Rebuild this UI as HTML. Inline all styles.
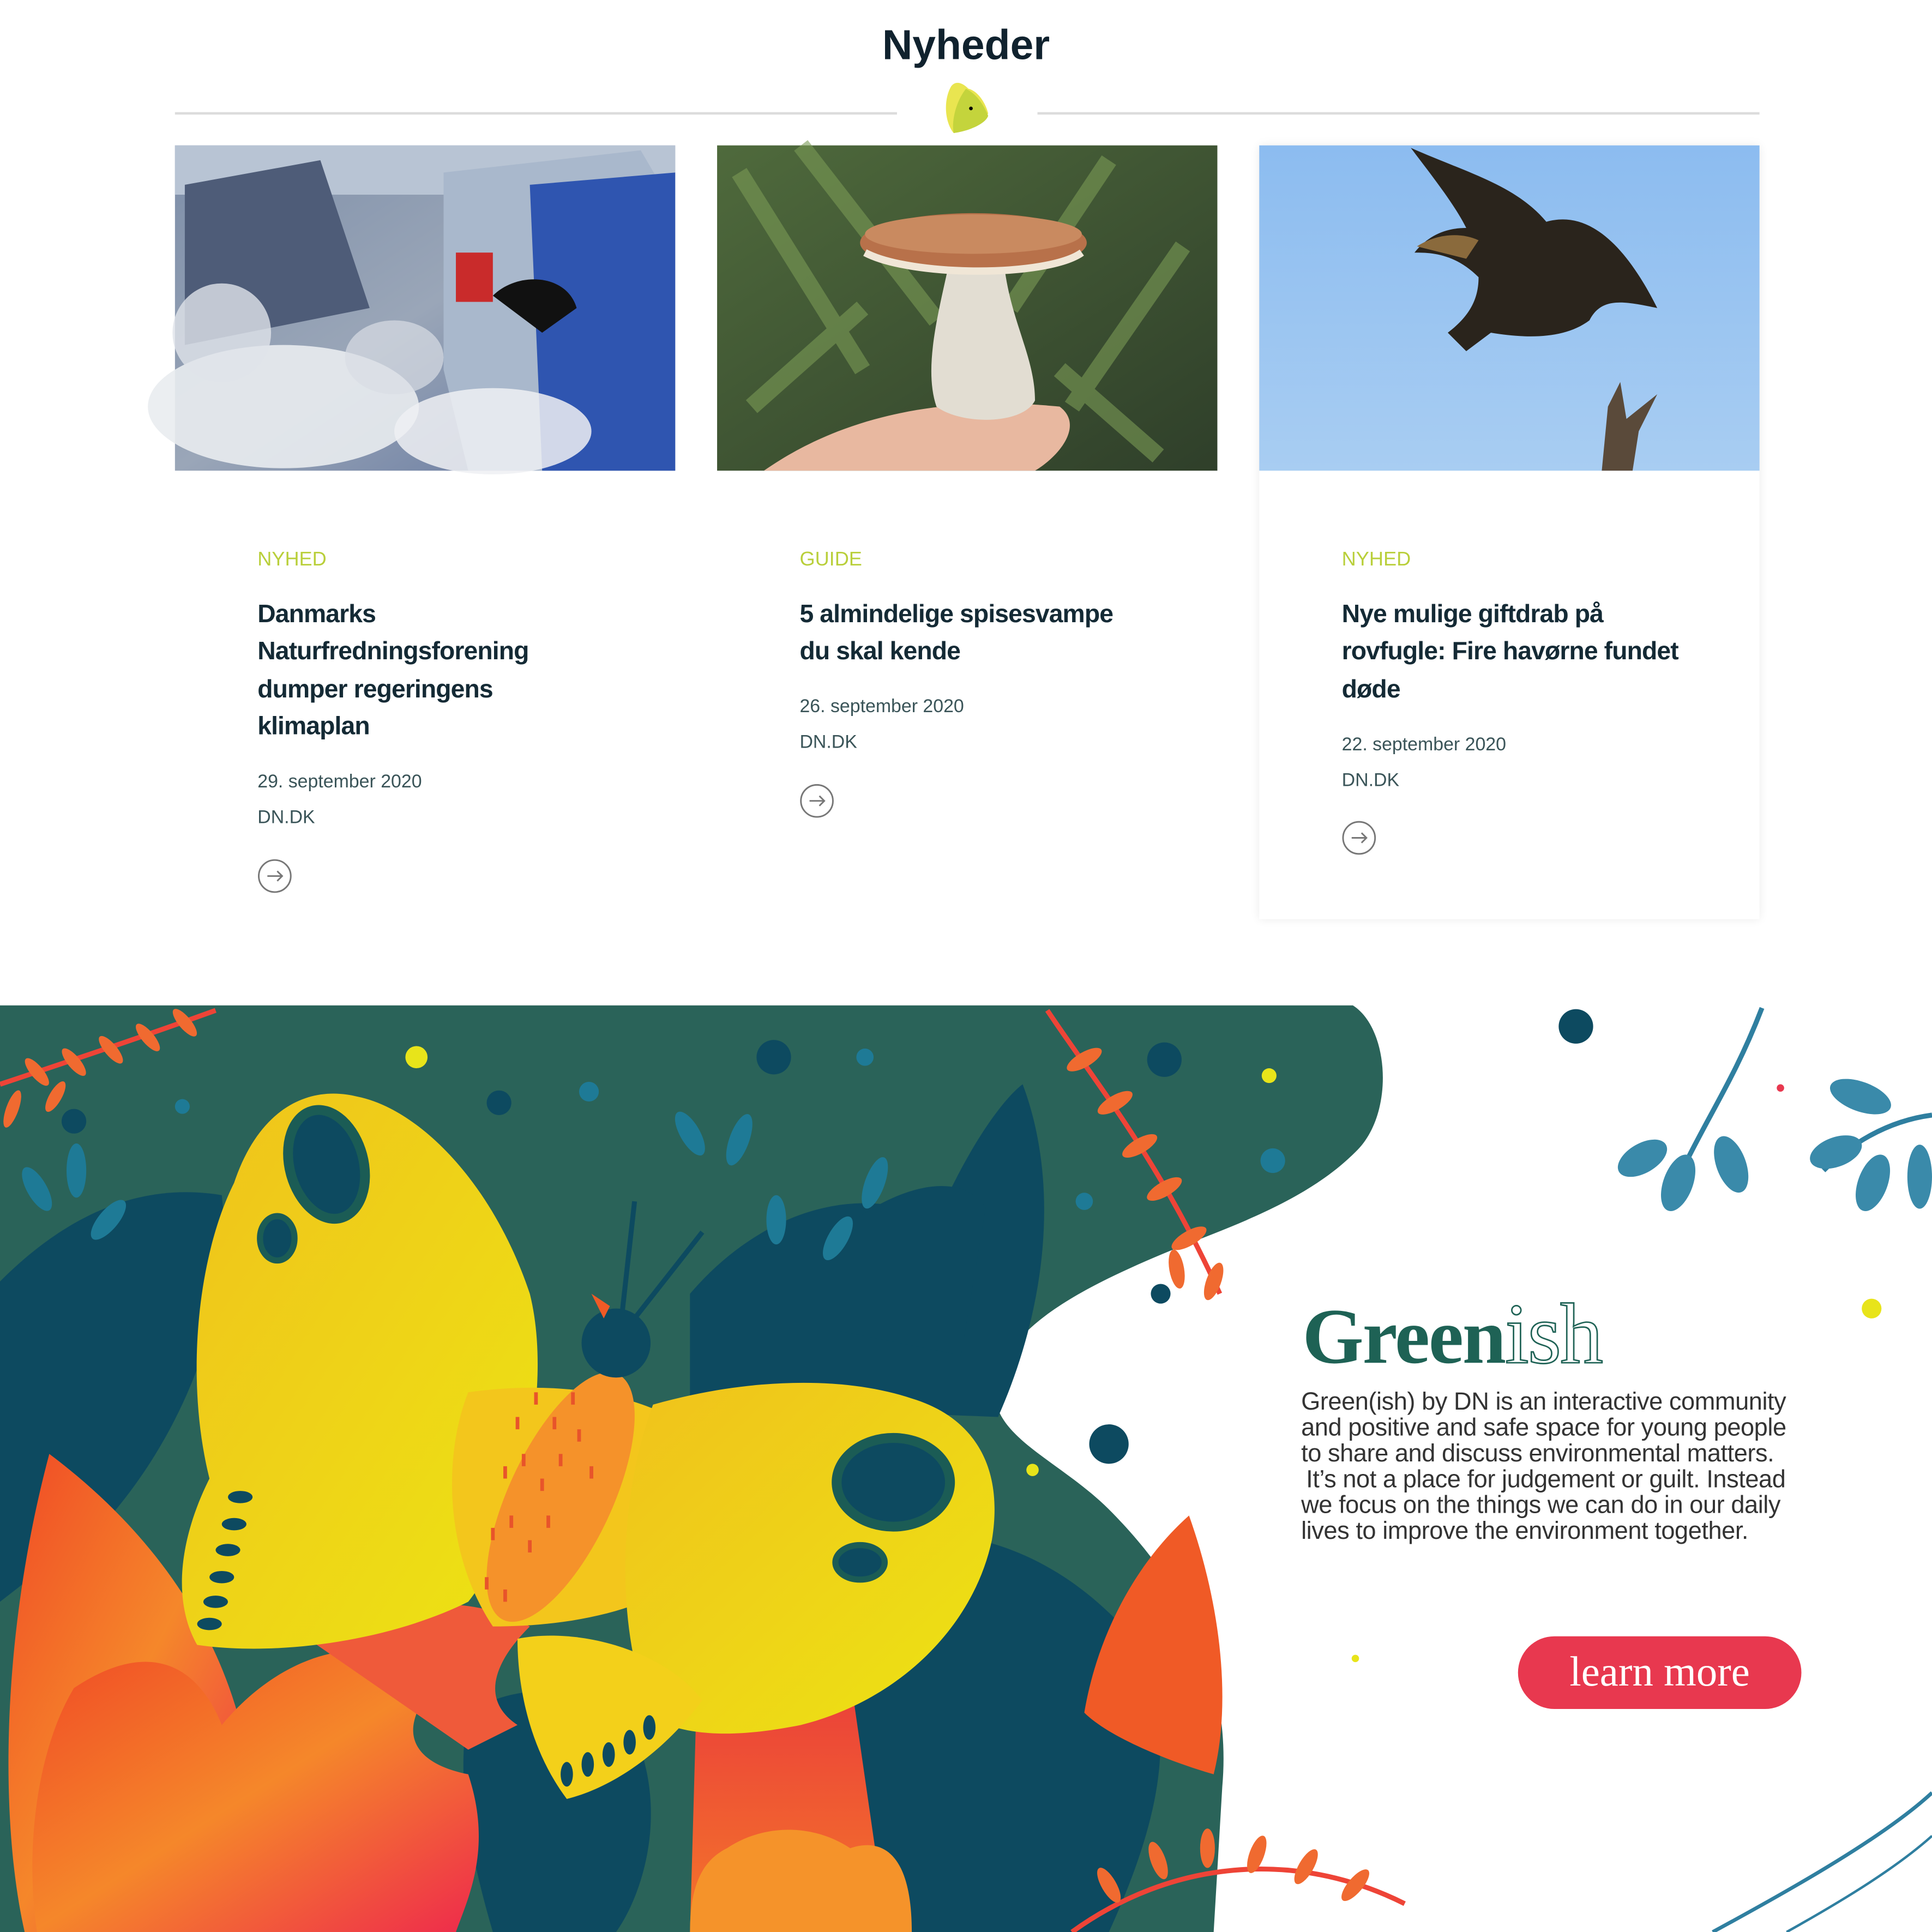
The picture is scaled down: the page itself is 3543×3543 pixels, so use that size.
<!DOCTYPE html>
<html><head><meta charset="utf-8"><style>html,body{margin:0;padding:0;background:#fff}svg{display:block}</style></head>
<body>
<svg width="3543" height="3543" viewBox="0 0 1568 1568" xmlns="http://www.w3.org/2000/svg">
<defs>
<linearGradient id="sky" x1="0" y1="0" x2="0" y2="1"><stop offset="0" stop-color="#8cbcf0"/><stop offset="1" stop-color="#a8cdf2"/></linearGradient>
<linearGradient id="cars" x1="0" y1="0" x2="1" y2="1"><stop offset="0" stop-color="#7d8ea8"/><stop offset="0.5" stop-color="#9aa6b8"/><stop offset="1" stop-color="#5b6f9a"/></linearGradient>
<linearGradient id="fern" x1="0" y1="0" x2="1" y2="1"><stop offset="0" stop-color="#4f6a3c"/><stop offset="1" stop-color="#2f3f2a"/></linearGradient>
<linearGradient id="yel" x1="0" y1="0" x2="1" y2="1"><stop offset="0" stop-color="#f0c21c"/><stop offset="1" stop-color="#ece413"/></linearGradient>
<linearGradient id="red" x1="0" y1="0" x2="1" y2="1"><stop offset="0" stop-color="#f04a26"/><stop offset="0.5" stop-color="#f5872a"/><stop offset="1" stop-color="#ee2a4c"/></linearGradient>
<linearGradient id="red2" x1="0" y1="0" x2="0" y2="1"><stop offset="0" stop-color="#ea3b3b"/><stop offset="1" stop-color="#f4762a"/></linearGradient>
<filter id="sh" x="-10%" y="-10%" width="120%" height="120%"><feGaussianBlur stdDeviation="4"/></filter>
</defs>

<text x="784" y="48" text-anchor="middle" font-family="Liberation Sans, sans-serif" font-weight="bold" font-size="34" fill="#10222e">Nyheder</text>
<line x1="142" y1="92" x2="728" y2="92" stroke="#dcdcdc" stroke-width="2"/>
<line x1="842" y1="92" x2="1428" y2="92" stroke="#dcdcdc" stroke-width="2"/>
<path d="M772,70 C766,80 766,98 774,108 C786,106 798,100 802,92 C800,84 794,74 786,72 C780,66 775,66 772,70Z" fill="#e9e550"/>
<path d="M784,72 C776,82 772,98 774,108 C788,106 800,100 802,94 C798,84 792,76 784,72Z" fill="#c4d43c"/>
<circle cx="788" cy="88" r="1.5" fill="#000"/>

<rect x="1022" y="118" width="406" height="628" fill="#000" opacity="0.08" filter="url(#sh)"/>
<rect x="1022" y="118" width="406" height="628" fill="#fff"/>

<g>
<rect x="142" y="118" width="406" height="264" fill="url(#cars)"/>
<rect x="142" y="118" width="406" height="40" fill="#b8c4d4"/>
<path d="M150,150 L260,130 L300,250 L150,280Z" fill="#4e5c78"/>
<path d="M360,140 L520,122 L548,170 L548,382 L380,382 L360,300Z" fill="#a9b8cc"/>
<path d="M430,150 L548,140 L548,382 L440,382Z" fill="#2f55b0"/>
<path d="M400,240 C420,220 460,222 468,250 L440,270 Z" fill="#111"/>
<rect x="370" y="205" width="30" height="40" fill="#c92b2b"/>
<ellipse cx="230" cy="330" rx="110" ry="50" fill="#e9ecef" opacity="0.9"/>
<ellipse cx="180" cy="270" rx="40" ry="40" fill="#e0e4ea" opacity="0.8"/>
<ellipse cx="400" cy="350" rx="80" ry="35" fill="#eef0f3" opacity="0.85"/>
<ellipse cx="320" cy="290" rx="40" ry="30" fill="#d8dde4" opacity="0.7"/>
</g>

<g>
<rect x="582" y="118" width="406" height="264" fill="url(#fern)"/>
<path d="M600,140 L700,300 M650,118 L760,260 M900,130 L820,250 M960,200 L870,330 M610,330 L700,250 M940,370 L860,300" stroke="#7a9a55" stroke-width="14" opacity="0.6"/>
<path d="M620,382 C680,340 760,320 860,330 C880,345 860,370 840,382Z" fill="#e8b8a0"/>
<path d="M770,215 C760,260 750,300 760,330 C780,345 830,345 840,325 C840,290 820,260 815,215Z" fill="#e2ddd2"/>
<ellipse cx="790" cy="197" rx="92" ry="24" fill="#b8714a"/>
<ellipse cx="790" cy="190" rx="88" ry="16" fill="#c98a60"/>
<path d="M702,205 C740,225 850,225 878,205" stroke="#f0e6d6" stroke-width="6" fill="none"/>
</g>

<g>
<rect x="1022" y="118" width="406" height="264" fill="url(#sky)"/>
<path d="M1145,120 C1190,140 1230,150 1255,180 C1290,170 1320,200 1345,250 C1320,245 1300,240 1290,260 C1270,275 1240,275 1210,270 L1190,285 L1175,270 C1195,255 1200,240 1200,225 C1180,205 1160,205 1148,205 C1160,190 1175,185 1190,185 C1180,165 1160,140 1145,120Z" fill="#2a241c"/>
<path d="M1150,200 C1165,190 1185,188 1200,195 L1190,210Z" fill="#8a6a3c"/>
<path d="M1300,382 L1305,330 L1315,310 L1320,340 L1345,320 L1330,350 L1325,382Z" fill="#5a4a3a"/>
</g>

<g font-family="Liberation Sans, sans-serif">
<g font-size="16" fill="#b9cf3a"><text x="209" y="459">NYHED</text><text x="649" y="459">GUIDE</text><text x="1089" y="459">NYHED</text></g>
<g font-size="20.5" font-weight="bold" fill="#142a35" letter-spacing="-0.4">
<text x="209" y="505">Danmarks</text><text x="209" y="535">Naturfredningsforening</text><text x="209" y="566">dumper regeringens</text><text x="209" y="596">klimaplan</text>
<text x="649" y="505">5 almindelige spisesvampe</text><text x="649" y="535">du skal kende</text>
<text x="1089" y="505">Nye mulige giftdrab på</text><text x="1089" y="535">rovfugle: Fire havørne fundet</text><text x="1089" y="566">døde</text>
</g>
<g font-size="15" fill="#3a5458">
<text x="209" y="639">29. september 2020</text><text x="209" y="668">DN.DK</text>
<text x="649" y="578">26. september 2020</text><text x="649" y="607">DN.DK</text>
<text x="1089" y="609">22. september 2020</text><text x="1089" y="638">DN.DK</text>
</g>
</g>
<g fill="none" stroke="#777" stroke-width="1.3">
<circle cx="223" cy="711" r="13"/><path d="M217,711 H229 M225,707 L229,711 L225,715"/>
<circle cx="663" cy="650" r="13"/><path d="M657,650 H669 M665,646 L669,650 L665,654"/>
<circle cx="1103" cy="680" r="13"/><path d="M1097,680 H1109 M1105,676 L1109,680 L1105,684"/>
</g>

<path d="M0,816 L1098,816 C1128,835 1132,905 1100,935 C1060,975 1000,995 950,1015 C870,1048 815,1080 808,1125 C802,1165 860,1185 900,1225 C960,1285 1000,1360 992,1450 L985,1568 L0,1568Z" fill="#2a6359"/>
<g fill="#0d4a60">
<path d="M0,1040 C60,980 120,960 180,970 C190,1060 150,1160 90,1230 L0,1300Z"/>
<path d="M560,1050 C620,980 700,960 760,990 C800,900 830,880 830,880 C860,960 850,1060 810,1150 L560,1140Z"/>
<path d="M690,1250 C780,1230 860,1260 920,1330 C960,1400 940,1480 900,1568 L660,1568 C640,1450 650,1330 690,1250Z"/>
<path d="M380,1390 C430,1360 480,1370 520,1420 C540,1480 520,1540 500,1568 L400,1568 C380,1500 370,1440 380,1390Z"/>
<path d="M680,1000 C730,960 780,950 800,980 L780,1100 L680,1080Z"/>
</g>
<g fill="#1e7a96">
<ellipse cx="30" cy="965" rx="8" ry="20" transform="rotate(-30 30 965)"/><ellipse cx="62" cy="950" rx="8" ry="22"/><ellipse cx="88" cy="990" rx="8" ry="20" transform="rotate(40 88 990)"/>
<ellipse cx="560" cy="920" rx="8" ry="20" transform="rotate(-30 560 920)"/><ellipse cx="600" cy="925" rx="8" ry="22" transform="rotate(20 600 925)"/><ellipse cx="630" cy="990" rx="8" ry="20"/>
<ellipse cx="680" cy="1005" rx="8" ry="20" transform="rotate(30 680 1005)"/><ellipse cx="710" cy="960" rx="8" ry="22" transform="rotate(20 710 960)"/>
</g>
<g fill="#0d4a60"><circle cx="628" cy="858" r="14"/><circle cx="945" cy="860" r="14"/><circle cx="60" cy="910" r="10"/><circle cx="405" cy="895" r="10"/><circle cx="942" cy="1050" r="8"/><circle cx="900" cy="1172" r="16"/><circle cx="1279" cy="833" r="14"/></g>
<g fill="#1e7a96"><circle cx="478" cy="886" r="8"/><circle cx="702" cy="858" r="7"/><circle cx="148" cy="898" r="6"/><circle cx="1033" cy="942" r="10"/><circle cx="880" cy="975" r="7"/></g>
<g fill="#e8e41a"><circle cx="338" cy="858" r="9"/><circle cx="1030" cy="873" r="6"/><circle cx="1519" cy="1062" r="8"/><circle cx="838" cy="1193" r="5"/><circle cx="1100" cy="1346" r="3"/></g>
<circle cx="1445" cy="883" r="3" fill="#e8384f"/>
<path d="M40,1180 C120,1240 180,1320 200,1420 C220,1500 200,1540 180,1568 L20,1568 C0,1480 0,1330 40,1180Z" fill="url(#red)"/>
<path d="M60,1370 C120,1330 160,1350 180,1400 C230,1340 300,1320 360,1360 C320,1400 330,1430 380,1440 C400,1500 380,1540 370,1568 L30,1568 C20,1500 30,1420 60,1370Z" fill="url(#red)"/>
<path d="M250,1330 C300,1300 380,1290 430,1320 C400,1350 390,1380 420,1400 L380,1420Z" fill="#ef5a3a"/>
<path d="M565,1390 C600,1350 650,1345 690,1360 L720,1568 L560,1568Z" fill="url(#red2)"/>
<path d="M590,1500 C620,1480 660,1480 690,1500 C720,1490 740,1510 740,1568 L560,1568 C560,1530 570,1510 590,1500Z" fill="#f5932a"/>
<path d="M965,1230 C990,1300 1000,1380 985,1440 C950,1430 900,1410 880,1390 C890,1330 920,1270 965,1230Z" fill="#f05a26"/>
<g stroke="#ee4437" stroke-width="4" fill="none"><path d="M0,880 C60,860 120,840 175,820"/><path d="M850,820 C890,880 940,940 990,1050"/><path d="M870,1568 C950,1510 1050,1500 1140,1545"/></g>
<g fill="#f06a30">
<ellipse cx="30" cy="870" rx="5" ry="14" transform="rotate(-40 30 870)"/><ellipse cx="60" cy="862" rx="5" ry="14" transform="rotate(-40 60 862)"/><ellipse cx="90" cy="852" rx="5" ry="14" transform="rotate(-40 90 852)"/><ellipse cx="120" cy="842" rx="5" ry="14" transform="rotate(-40 120 842)"/><ellipse cx="150" cy="830" rx="5" ry="14" transform="rotate(-40 150 830)"/>
<ellipse cx="10" cy="900" rx="5" ry="16" transform="rotate(20 10 900)"/><ellipse cx="45" cy="890" rx="5" ry="14" transform="rotate(30 45 890)"/>
<ellipse cx="880" cy="860" rx="6" ry="16" transform="rotate(60 880 860)"/><ellipse cx="905" cy="895" rx="6" ry="16" transform="rotate(60 905 895)"/><ellipse cx="925" cy="930" rx="6" ry="16" transform="rotate(60 925 930)"/><ellipse cx="945" cy="965" rx="6" ry="16" transform="rotate(60 945 965)"/><ellipse cx="965" cy="1005" rx="6" ry="16" transform="rotate(60 965 1005)"/><ellipse cx="985" cy="1040" rx="6" ry="16" transform="rotate(20 985 1040)"/><ellipse cx="955" cy="1030" rx="6" ry="16" transform="rotate(-10 955 1030)"/>
<ellipse cx="900" cy="1530" rx="6" ry="16" transform="rotate(-30 900 1530)"/><ellipse cx="940" cy="1510" rx="6" ry="16" transform="rotate(-20 940 1510)"/><ellipse cx="980" cy="1500" rx="6" ry="16"/><ellipse cx="1020" cy="1505" rx="6" ry="16" transform="rotate(20 1020 1505)"/><ellipse cx="1060" cy="1515" rx="6" ry="16" transform="rotate(30 1060 1515)"/><ellipse cx="1100" cy="1530" rx="6" ry="16" transform="rotate(40 1100 1530)"/>
</g>
<path d="M190,960 C210,900 250,880 290,890 C340,900 400,960 430,1050 C450,1130 420,1250 380,1300 C320,1330 230,1345 160,1335 C140,1300 145,1250 170,1200 C150,1120 160,1020 190,960Z" fill="url(#yel)"/>
<path d="M380,1130 C450,1120 520,1130 560,1160 L600,1240 C560,1300 480,1320 400,1320 C360,1260 360,1180 380,1130Z" fill="#f3c61c"/>
<path d="M530,1140 C600,1120 680,1115 740,1135 C790,1150 815,1190 805,1250 C790,1320 730,1380 650,1400 C600,1410 560,1410 530,1395 C500,1330 500,1220 530,1140Z" fill="url(#yel)"/>
<path d="M420,1330 C470,1320 540,1340 570,1380 C540,1420 500,1450 460,1460 C430,1420 420,1370 420,1330Z" fill="#f3d01a"/>
<ellipse cx="265" cy="945" rx="30" ry="45" fill="#0d4a60" stroke="#1b5c55" stroke-width="8" transform="rotate(-15 265 945)"/>
<ellipse cx="225" cy="1005" rx="14" ry="18" fill="#0d4a60" stroke="#1b5c55" stroke-width="5"/>
<ellipse cx="725" cy="1203" rx="46" ry="36" fill="#0d4a60" stroke="#1b5c55" stroke-width="8"/>
<ellipse cx="698" cy="1268" rx="20" ry="14" fill="#0d4a60" stroke="#1b5c55" stroke-width="5"/>
<g fill="#0d4a60"><ellipse cx="195" cy="1215" rx="10" ry="5"/><ellipse cx="190" cy="1237" rx="10" ry="5"/><ellipse cx="185" cy="1258" rx="10" ry="5"/><ellipse cx="180" cy="1280" rx="10" ry="5"/><ellipse cx="175" cy="1300" rx="10" ry="5"/><ellipse cx="170" cy="1318" rx="10" ry="5"/>
<ellipse cx="460" cy="1440" rx="5" ry="10"/><ellipse cx="477" cy="1432" rx="5" ry="10"/><ellipse cx="494" cy="1424" rx="5" ry="10"/><ellipse cx="511" cy="1414" rx="5" ry="10"/><ellipse cx="527" cy="1402" rx="5" ry="10"/></g>
<ellipse cx="455" cy="1215" rx="42" ry="110" fill="#f5922a" transform="rotate(25 455 1215)"/>
<path d="M420,1150 l0,10 M435,1130 l0,10 M450,1150 l0,10 M465,1130 l0,10 M410,1190 l0,10 M425,1180 l0,10 M440,1200 l0,10 M455,1180 l0,10 M470,1160 l0,10 M400,1240 l0,10 M415,1230 l0,10 M430,1250 l0,10 M445,1230 l0,10 M395,1280 l0,10 M410,1290 l0,10 M480,1190 l0,10" stroke="#e8542a" stroke-width="3"/>
<circle cx="500" cy="1090" r="28" fill="#0d4a60"/>
<path d="M490,1070 L480,1050 L495,1060Z" fill="#f05a26"/>
<path d="M505,1065 L515,975 M515,1070 L570,1000" stroke="#0d4a60" stroke-width="4"/>

<g fill="#3a8aaa">
<path d="M1430,818 C1410,870 1390,900 1370,940" stroke="#2f7fa0" stroke-width="4" fill="none"/>
<ellipse cx="1333" cy="940" rx="22" ry="12" transform="rotate(-30 1333 940)"/><ellipse cx="1362" cy="960" rx="12" ry="24" transform="rotate(20 1362 960)"/><ellipse cx="1405" cy="945" rx="12" ry="24" transform="rotate(-20 1405 945)"/>
<path d="M1568,905 C1530,910 1500,930 1480,950" stroke="#2f7fa0" stroke-width="4" fill="none"/>
<ellipse cx="1510" cy="890" rx="26" ry="12" transform="rotate(20 1510 890)"/><ellipse cx="1490" cy="935" rx="22" ry="12" transform="rotate(-20 1490 935)"/><ellipse cx="1520" cy="960" rx="12" ry="24" transform="rotate(20 1520 960)"/><ellipse cx="1558" cy="955" rx="10" ry="26"/>
</g>
<path d="M1390,1568 C1460,1530 1530,1490 1568,1455" stroke="#2f7fa0" stroke-width="3" fill="none"/>
<path d="M1450,1568 C1500,1540 1540,1515 1568,1490" stroke="#2f7fa0" stroke-width="2" fill="none"/>

<text x="1057" y="1106" font-family="Liberation Serif, serif" font-weight="bold" font-size="64" fill="#1e6255" letter-spacing="-1">Green<tspan fill="none" stroke="#1e6255" stroke-width="1.2" font-weight="normal" font-size="70">ish</tspan></text>
<g font-family="Liberation Sans, sans-serif" font-size="20" fill="#333" letter-spacing="-0.2">
<text x="1056" y="1144">Green(ish) by DN is an interactive community</text>
<text x="1056" y="1165">and positive and safe space for young people</text>
<text x="1056" y="1186">to share and discuss environmental matters.</text>
<text x="1060" y="1207">It’s not a place for judgement or guilt. Instead</text>
<text x="1056" y="1228">we focus on the things we can do in our daily</text>
<text x="1056" y="1249">lives to improve the environment together.</text>
</g>
<rect x="1232" y="1328" width="230" height="59" rx="29.5" fill="#e8384f"/>
<text x="1347" y="1368" text-anchor="middle" font-family="Liberation Serif, serif" font-size="34" fill="#fff">learn more</text>
</svg>
</body></html>
